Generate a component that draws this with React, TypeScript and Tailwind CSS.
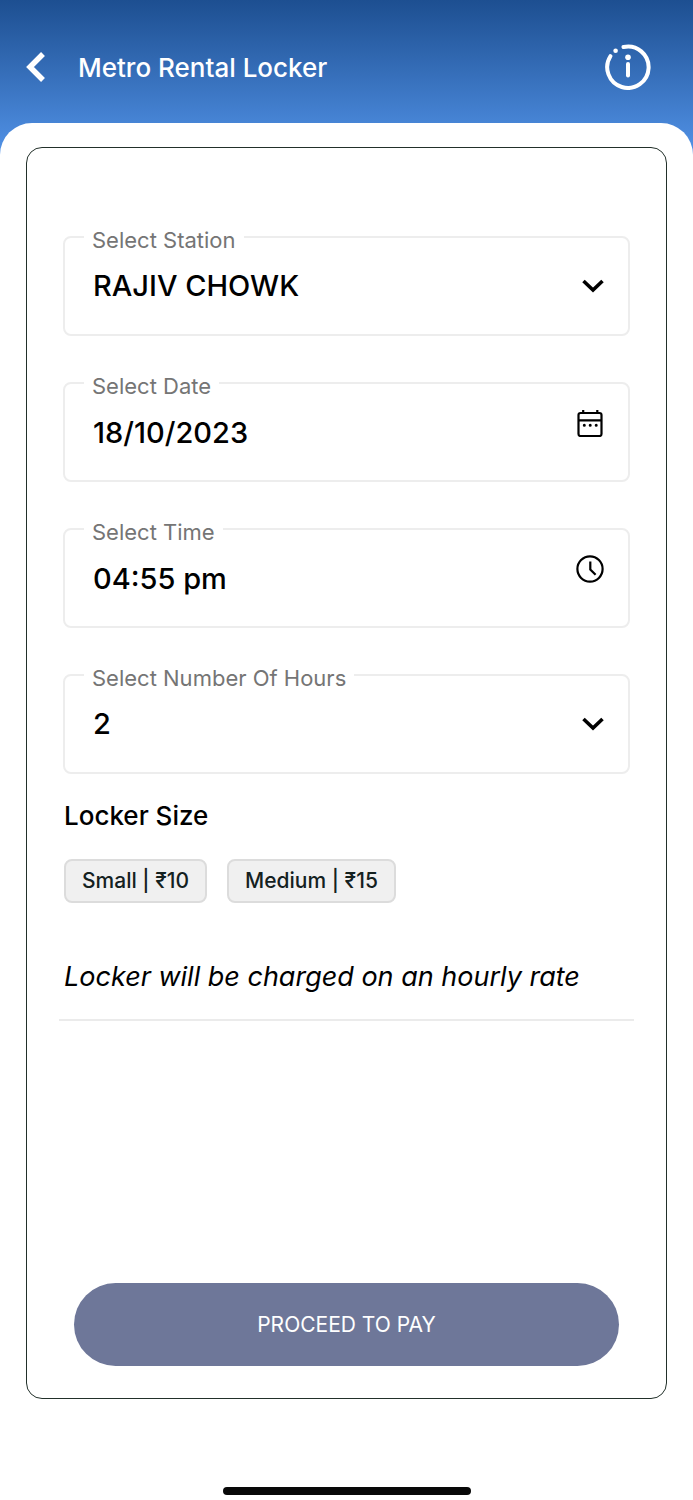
import { useState } from 'react'
import type { ReactNode } from 'react'

const STATIONS = ['RAJIV CHOWK', 'KASHMERE GATE', 'HAUZ KHAS', 'NEW DELHI']
const HOURS = ['1', '2', '3', '4', '5', '6']

const SIZES = [
  { key: 'small', label: 'Small', price: 10 },
  { key: 'medium', label: 'Medium', price: 15 },
] as const
type SizeKey = typeof SIZES[number]['key']

const control = 'block w-full h-[68px] pl-7 pr-20 bg-transparent text-[29px] font-medium text-black outline-none'

function BackIcon() {
  return (
    <svg width={20} height={32} viewBox="0 0 20 32" fill="none" stroke="currentColor" strokeWidth="5.5">
      <path d="M17 3 4 16l13 13" />
    </svg>
  )
}

function InfoIcon() {
  return (
    <svg width={46} height={46} viewBox="0 0 46 46" fill="none" stroke="currentColor" strokeWidth="4" strokeLinecap="round">
      <path d="M18.5 3A20.7 20.7 0 1 1 5.4 12.2" />
      <path d="M23 20v11.5" />
      <circle cx={10.6} cy={6.8} r={2.3} fill="currentColor" stroke="none" />
      <circle cx={23} cy={13.2} r={2.8} fill="currentColor" stroke="none" />
    </svg>
  )
}

function ChevronIcon() {
  return (
    <svg width={22} height={14} viewBox="0 0 22 14" fill="none" stroke="currentColor" strokeWidth="3.6">
      <path d="m1.5 2 9.5 9 9.5-9" />
    </svg>
  )
}

function CalendarIcon() {
  return (
    <svg width={28} height={28} viewBox="0 0 28 28" fill="none" stroke="currentColor" strokeWidth="2.2">
      <rect x={2.5} y={4} width={23} height={23} rx={2} />
      <path d="M2.5 11.3h23M7.2 1v3M21.3 1v3" />
      <path d="M8.3 16.3h.01M14.2 16.3h.01M20.2 16.3h.01" strokeWidth="3" strokeLinecap="round" />
    </svg>
  )
}

function ClockIcon() {
  return (
    <svg width={28} height={28} viewBox="0 0 28 28" fill="none" stroke="currentColor" strokeWidth="2.2">
      <circle cx={14} cy={14} r={12.6} />
      <path d="M14.3 6.5v8l5.3 5.3" />
    </svg>
  )
}

function Field({ id, label, children }: { id: string; label: string; children: ReactNode }) {
  return (
    <fieldset className="min-w-0 rounded-lg border-2 border-[#ededed] pb-3.5">
      <legend className="ml-[19px] px-2 pt-1.5 text-[22px] leading-6 text-[#757575]">
        <label htmlFor={id}>{label}</label>
      </legend>
      <div className="relative">{children}</div>
    </fieldset>
  )
}

export default function App() {
  const [station, setStation] = useState('RAJIV CHOWK')
  const [date, setDate] = useState('18/10/2023')
  const [time, setTime] = useState('04:55 pm')
  const [hours, setHours] = useState('2')
  const [size, setSize] = useState<SizeKey | null>(null)

  return (
    <div className="min-h-screen flex flex-col bg-white text-black font-['Inter',sans-serif]">
      <header className="flex items-center pt-11 pb-[65px] pl-[26px] pr-[42px] text-white bg-linear-to-b from-[#1d4f91] to-[#5293e8]">
        <button type="button" aria-label="Back">
          <BackIcon />
        </button>
        <h1 className="ml-8 flex-1 text-[26px] font-medium">Metro Rental Locker</h1>
        <button type="button" aria-label="Information">
          <InfoIcon />
        </button>
      </header>

      <main className="relative -mt-8 flex-1 flex flex-col rounded-t-[32px] bg-white px-[26px] pt-6">
        <form className="flex-1 flex flex-col rounded-2xl border border-[#22302a] px-9 pt-[74px] pb-8"
          onSubmit={(e) => e.preventDefault()}>
          <div className="space-y-8">
            <Field id="station" label="Select Station">
              <select id="station" className={`${control} appearance-none`}
                value={station} onChange={(e) => setStation(e.target.value)}>
                {STATIONS.map((s) => <option key={s}>{s}</option>)}
              </select>
              <span className="absolute right-6 top-[27px] pointer-events-none"><ChevronIcon /></span>
            </Field>

            <Field id="date" label="Select Date">
              <input id="date" type="text" className={control}
                value={date} onChange={(e) => setDate(e.target.value)} />
              <button type="button" aria-label="Open calendar" className="absolute right-6 top-[11px]">
                <CalendarIcon />
              </button>
            </Field>

            <Field id="time" label="Select Time">
              <input id="time" type="text" className={control}
                value={time} onChange={(e) => setTime(e.target.value)} />
              <button type="button" aria-label="Open clock" className="absolute right-6 top-[11px]">
                <ClockIcon />
              </button>
            </Field>

            <Field id="hours" label="Select Number Of Hours">
              <select id="hours" className={`${control} appearance-none`}
                value={hours} onChange={(e) => setHours(e.target.value)}>
                {HOURS.map((h) => <option key={h}>{h}</option>)}
              </select>
              <span className="absolute right-6 top-[27px] pointer-events-none"><ChevronIcon /></span>
            </Field>
          </div>

          <div className="px-px">
            <h2 className="mt-[22px] text-[26px] leading-10 font-medium">Locker Size</h2>
            <div className="mt-[23px] flex flex-wrap gap-5">
              {SIZES.map((s) => (
                <button key={s.key} type="button" aria-pressed={size === s.key} onClick={() => setSize(s.key)}
                  className={`h-11 px-4 rounded-lg border-2 bg-[#f0f0f0] text-[21px] font-medium text-[#14211f] ${size === s.key ? 'border-[#1d4f91]' : 'border-[#dcdcdc]'}`}>
                  {s.label} | ₹{s.price}
                </button>
              ))}
            </div>
            <p className="mt-[54px] text-[27px] leading-10 italic">Locker will be charged on an hourly rate</p>
          </div>
          <hr className="-mx-1 mt-[22px] border-t-2 border-[#ebebeb]" />

          <div className="mt-auto px-[11px] pt-8">
            <button type="submit" className="w-full h-[83px] rounded-full bg-[#6e7799] text-[21px] text-white">
              PROCEED TO PAY
            </button>
          </div>
        </form>

        {/* Home indicator */}
        <div className="mt-22 mb-[5px] mx-auto h-2 w-[248px] rounded-full bg-[#080808]" />
      </main>
    </div>
  )
}
